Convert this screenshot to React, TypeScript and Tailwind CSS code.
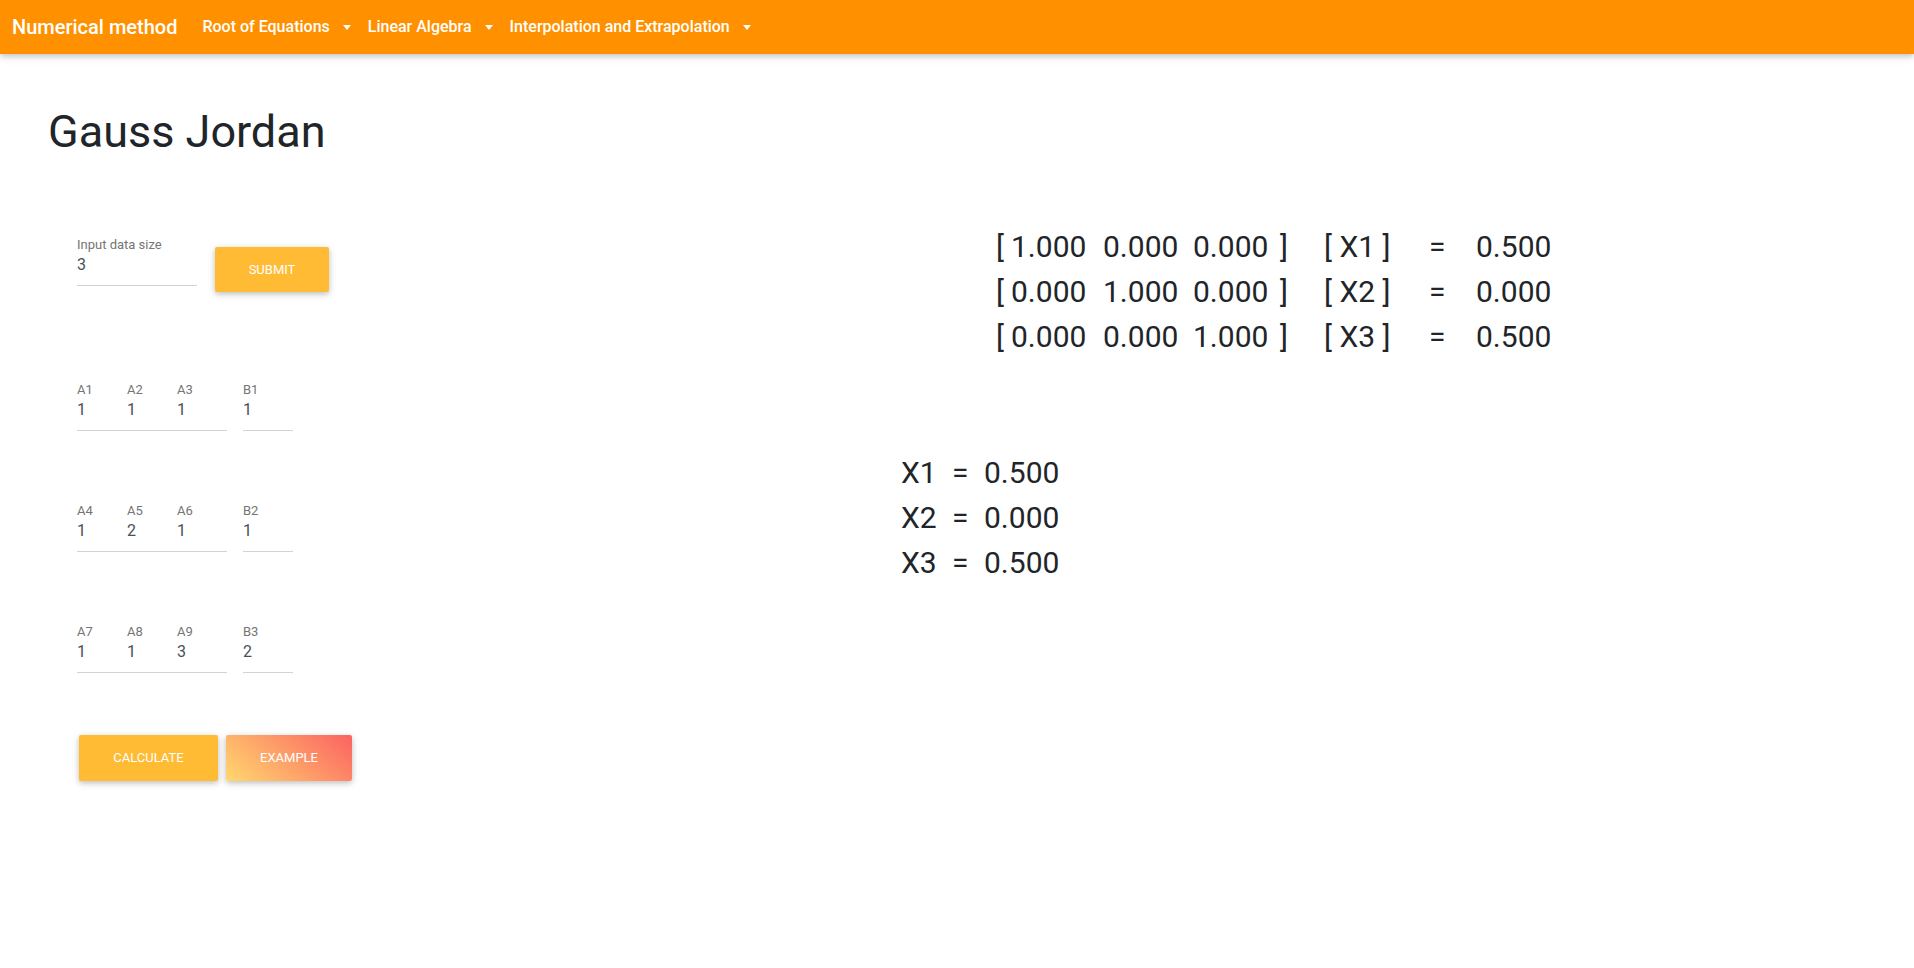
import { useState } from 'react';

const navItems = ['Root of Equations', 'Linear Algebra', 'Interpolation and Extrapolation'];

const matrix = [
    ['1.000', '0.000', '0.000'],
    ['0.000', '1.000', '0.000'],
    ['0.000', '0.000', '1.000'],
];
const answers = ['0.500', '0.000', '0.500'];

function Caret() {
    return (
        <span className="ml-[13px] inline-block w-0 h-0 border-l-[4.5px] border-r-[4.5px] border-t-[5px] border-l-transparent border-r-transparent border-t-white" />
    );
}

function Field({ label, value, width = 'w-[50px]' }: { label: string; value: string; width?: string }) {
    return (
        <div className={width}>
            <div className="text-[13px] leading-[16px] text-[#757575]">{label}</div>
            <div className="text-[16px] leading-[24px] text-[#495057]">{value}</div>
        </div>
    );
}

export default function App() {
    const [size] = useState('3');
    const rows = [
        { a: ['1', '1', '1'], b: '1' },
        { a: ['1', '2', '1'], b: '1' },
        { a: ['1', '1', '3'], b: '2' },
    ];

    return (
        <div className="min-h-screen bg-white font-['Roboto','Liberation_Sans',sans-serif] text-[#212529]">
            {/* navbar */}
            <nav className="h-[54px] bg-[#ff9100] flex items-center pl-[12px] shadow-[0_2px_5px_0_rgba(0,0,0,0.16),0_2px_10px_0_rgba(0,0,0,0.12)]">
                <span className="text-[20px] font-medium text-white">Numerical method</span>
                <div className="flex items-center ml-[25px] gap-[17px]">
                    {navItems.map((item) => (
                        <div key={item} className="flex items-center text-[16px] font-medium text-white">
                            {item}
                            <Caret />
                        </div>
                    ))}
                </div>
            </nav>

            <main className="pl-[48px]">
                <h1 className="mt-[51px] text-[45px] leading-[54px] font-normal">Gauss Jordan</h1>

                <div className="flex">
                    {/* left: inputs */}
                    <div className="w-[800px] pl-[29px] pt-[78px]">
                        <div className="flex items-start">
                            <div className="w-[120px] pb-[8px] border-b border-[#ced4da]">
                                <Field label="Input data size" value={size} width="w-full" />
                            </div>
                            <button className="ml-[18px] mt-[10px] w-[114px] h-[45px] bg-[#ffbb33] text-white text-[13px] uppercase rounded-[2px] shadow-[0_2px_5px_0_rgba(0,0,0,0.16),0_2px_10px_0_rgba(0,0,0,0.12)]">
                                Submit
                            </button>
                        </div>

                        {rows.map((row, i) => (
                            <div key={i} className={`flex ${i === 0 ? 'mt-[90px]' : 'mt-[72px]'}`}>
                                <div className="flex pb-[8px] border-b border-[#ced4da]">
                                    {row.a.map((v, j) => (
                                        <Field key={j} label={`A${i * 3 + j + 1}`} value={v} />
                                    ))}
                                </div>
                                <div className="ml-[16px] pb-[8px] border-b border-[#ced4da]">
                                    <Field label={`B${i + 1}`} value={row.b} />
                                </div>
                            </div>
                        ))}

                        <div className="flex mt-[62px] ml-[2px] gap-[8px]">
                            <button className="w-[139px] h-[46px] bg-[#ffbb33] text-white text-[13px] uppercase rounded-[2px] shadow-[0_2px_5px_0_rgba(0,0,0,0.16),0_2px_10px_0_rgba(0,0,0,0.12)]">
                                Calculate
                            </button>
                            <button className="w-[126px] h-[46px] bg-[linear-gradient(40deg,#ffd86f,#fc6262)] text-white text-[13px] uppercase rounded-[2px] shadow-[0_2px_5px_0_rgba(0,0,0,0.16),0_2px_10px_0_rgba(0,0,0,0.12)]">
                                Example
                            </button>
                        </div>
                    </div>

                    {/* right: result */}
                    <div className="flex-1 pt-[65px]">
                        <div className="pl-[148px] text-[30px] leading-[45px] font-normal">
                            {matrix.map((r, i) => (
                                <div key={i} className="flex whitespace-pre">
                                    <span className="w-[15px]">[</span>
                                    <span className="w-[92px]">{r[0]}</span>
                                    <span className="w-[90px]">{r[1]}</span>
                                    <span className="w-[87px]">{r[2]}</span>
                                    <span className="w-[44px]">]</span>
                                    <span className="w-[105px]">{`[ X${i + 1} ]`}</span>
                                    <span className="w-[47px]">=</span>
                                    <span>{answers[i]}</span>
                                </div>
                            ))}
                        </div>

                        <div className="pl-[53px] mt-[91px] text-[30px] leading-[45px] font-normal">
                            {answers.map((v, i) => (
                                <div key={i} className="flex">
                                    <span className="w-[51px]">X{i + 1}</span>
                                    <span className="w-[32px]">=</span>
                                    <span>{v}</span>
                                </div>
                            ))}
                        </div>
                    </div>
                </div>
            </main>
        </div>
    );
}
